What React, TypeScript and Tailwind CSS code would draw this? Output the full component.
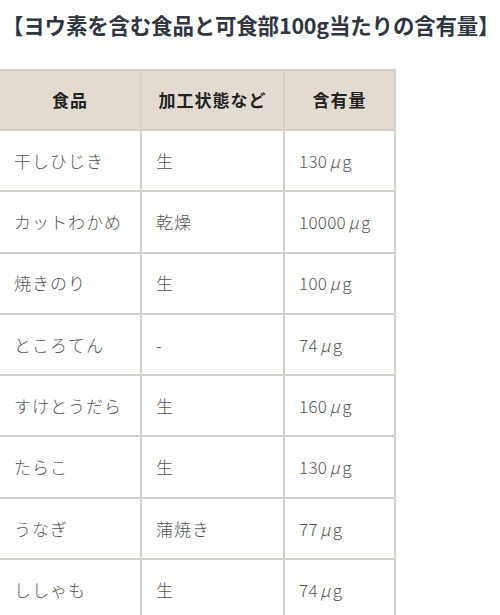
const rows: [string, string, string][] = [
  ["干しひじき", "生", "130"],
  ["カットわかめ", "乾燥", "10000"],
  ["焼きのり", "生", "100"],
  ["ところてん", "-", "74"],
  ["すけとうだら", "生", "160"],
  ["たらこ", "生", "130"],
  ["うなぎ", "蒲焼き", "77"],
  ["ししゃも", "生", "74"],
];

const font = "font-['Noto_Sans_CJK_JP','Noto_Sans',sans-serif]";

export default function App() {
  return (
    <main className={`w-[500px] h-[615px] overflow-hidden bg-white ${font}`}>
      <h2 className="pt-[9px] pl-[2px] text-[21.5px] leading-[32px] font-bold text-[#2f3642] whitespace-nowrap tracking-[-0.2px]">
        【ヨウ素を含む食品と可食部100g当たりの含有量】
      </h2>
      <table className="mt-[28px] -ml-[2px] border-collapse text-[17px] tracking-[1px]">
        <thead>
          <tr className="bg-[#e3dbd0] h-[60px]">
            <th className="w-[142px] border-2 border-[#d4d0ca] font-bold text-[#222] text-center">食品</th>
            <th className="w-[143px] border-2 border-[#d4d0ca] font-bold text-[#222] text-center">加工状態など</th>
            <th className="w-[111px] border-2 border-[#d4d0ca] font-bold text-[#222] text-center">含有量</th>
          </tr>
        </thead>
        <tbody>
          {rows.map(([food, state, amount]) => (
            <tr key={food} className="h-[61.3px]">
              <td className="border-2 border-[#d4d0ca] pl-[14px] text-[#555] font-light">{food}</td>
              <td className="border-2 border-[#d4d0ca] pl-[14px] text-[#555] font-light">{state}</td>
              <td className="border-2 border-[#d4d0ca] pl-[14px] text-[#555] font-light tracking-[0.3px] whitespace-nowrap">
                {amount}
                <span className="inline-block w-[15px] text-center italic">μ</span>
                g
              </td>
            </tr>
          ))}
        </tbody>
      </table>
    </main>
  );
}
